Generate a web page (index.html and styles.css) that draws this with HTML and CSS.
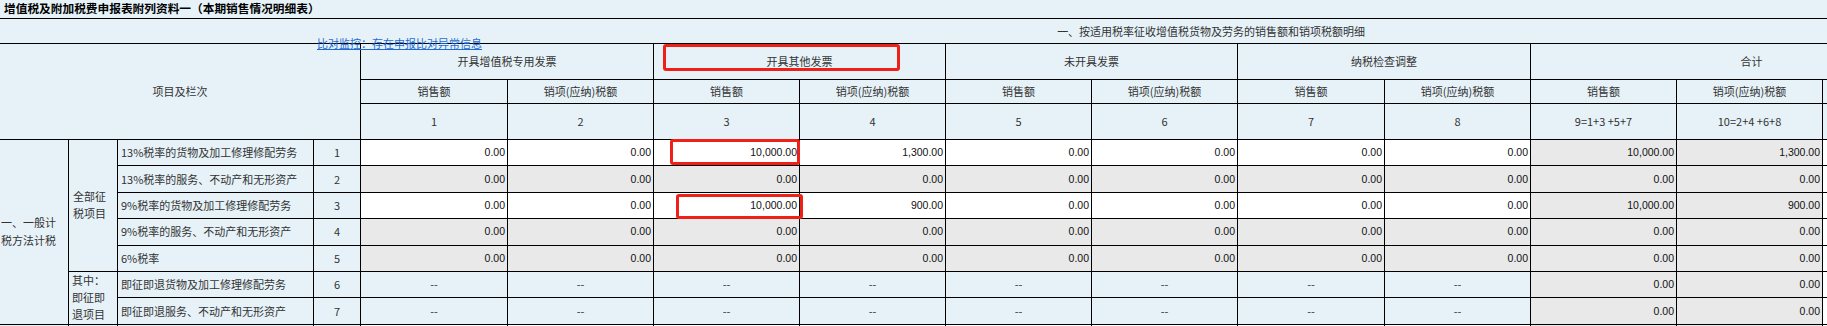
FILE: index.html
```html
<!DOCTYPE html>
<html lang="zh-CN">
<head>
<meta charset="utf-8">
<title>增值税及附加税费申报表附列资料一</title>
<link rel="stylesheet" href="styles.css">
</head>
<body>
<div class="page">
  <div class="title">增值税及附加税费申报表附列资料一（本期销售情况明细表）</div>
  <div class="sheet">
    <table class="grid">
      <colgroup>
        <col class="c-cat"><col class="c-sub"><col class="c-name"><col class="c-no">
        <col class="c-w"><col class="c-d"><col class="c-d"><col class="c-d"><col class="c-d">
        <col class="c-d"><col class="c-w"><col class="c-d"><col class="c-d"><col class="c-d">
        <col class="c-x"><col class="c-x"><col class="c-x"><col class="c-x">
      </colgroup>
      <thead>
        <tr class="h1"><th colspan="18">一、按适用税率征收增值税货物及劳务的销售额和销项税额明细</th></tr>
        <tr class="h2">
          <th colspan="4" rowspan="3">项目及栏次</th>
          <th colspan="2">开具增值税专用发票</th>
          <th colspan="2">开具其他发票</th>
          <th colspan="2">未开具发票</th>
          <th colspan="2">纳税检查调整</th>
          <th colspan="3">合计</th>
          <th rowspan="2">服务、不动产和无形资产扣除项目本期实际扣除金额</th>
          <th colspan="2">扣除后</th>
        </tr>
        <tr class="h3">
          <th>销售额</th><th>销项(应纳)税额</th>
          <th>销售额</th><th>销项(应纳)税额</th>
          <th>销售额</th><th>销项(应纳)税额</th>
          <th>销售额</th><th>销项(应纳)税额</th>
          <th>销售额</th><th>销项(应纳)税额</th><th>价税合计</th>
          <th>含税(免税)销售额</th><th>销项(应纳)税额</th>
        </tr>
        <tr class="h4">
          <th>1</th><th>2</th><th>3</th><th>4</th><th>5</th><th>6</th><th>7</th><th>8</th>
          <th>9=1+3 +5+7</th><th>10=2+4 +6+8</th><th>11=9+10</th><th>12</th><th>13=11-12</th><th>14</th>
        </tr>
      </thead>
      <tbody>
        <tr>
          <td class="cat" rowspan="7">一、一般计<br>税方法计税</td>
          <td class="sub" rowspan="5">全部征<br>税项目</td>
          <td class="name">13%税率的货物及加工修理修配劳务</td><td class="no">1</td>
          <td class="num in">0.00</td><td class="num in">0.00</td><td class="num in">10,000.00</td><td class="num in">1,300.00</td>
          <td class="num in">0.00</td><td class="num in">0.00</td><td class="num in">0.00</td><td class="num in">0.00</td>
          <td class="num ro">10,000.00</td><td class="num ro">1,300.00</td><td class="num in"></td><td class="num in"></td><td class="num in"></td><td class="num in"></td>
        </tr>
        <tr>
          <td class="name">13%税率的服务、不动产和无形资产</td><td class="no">2</td>
          <td class="num ro">0.00</td><td class="num ro">0.00</td><td class="num ro">0.00</td><td class="num ro">0.00</td>
          <td class="num ro">0.00</td><td class="num ro">0.00</td><td class="num ro">0.00</td><td class="num ro">0.00</td>
          <td class="num ro">0.00</td><td class="num ro">0.00</td><td class="num in"></td><td class="num in"></td><td class="num in"></td><td class="num in"></td>
        </tr>
        <tr>
          <td class="name">9%税率的货物及加工修理修配劳务</td><td class="no">3</td>
          <td class="num in">0.00</td><td class="num in">0.00</td><td class="num in">10,000.00</td><td class="num in">900.00</td>
          <td class="num in">0.00</td><td class="num in">0.00</td><td class="num in">0.00</td><td class="num in">0.00</td>
          <td class="num ro">10,000.00</td><td class="num ro">900.00</td><td class="num in"></td><td class="num in"></td><td class="num in"></td><td class="num in"></td>
        </tr>
        <tr>
          <td class="name">9%税率的服务、不动产和无形资产</td><td class="no">4</td>
          <td class="num ro">0.00</td><td class="num ro">0.00</td><td class="num ro">0.00</td><td class="num ro">0.00</td>
          <td class="num ro">0.00</td><td class="num ro">0.00</td><td class="num ro">0.00</td><td class="num ro">0.00</td>
          <td class="num ro">0.00</td><td class="num ro">0.00</td><td class="num in"></td><td class="num in"></td><td class="num in"></td><td class="num in"></td>
        </tr>
        <tr>
          <td class="name">6%税率</td><td class="no">5</td>
          <td class="num ro">0.00</td><td class="num ro">0.00</td><td class="num ro">0.00</td><td class="num ro">0.00</td>
          <td class="num ro">0.00</td><td class="num ro">0.00</td><td class="num ro">0.00</td><td class="num ro">0.00</td>
          <td class="num ro">0.00</td><td class="num ro">0.00</td><td class="num in"></td><td class="num in"></td><td class="num in"></td><td class="num in"></td>
        </tr>
        <tr>
          <td class="sub sub-tight" rowspan="2">其中：<br>即征即<br>退项目</td>
          <td class="name">即征即退货物及加工修理修配劳务</td><td class="no">6</td>
          <td class="na">--</td><td class="na">--</td><td class="na">--</td><td class="na">--</td>
          <td class="na">--</td><td class="na">--</td><td class="na">--</td><td class="na">--</td>
          <td class="num ro">0.00</td><td class="num ro">0.00</td><td class="num in"></td><td class="num in"></td><td class="num in"></td><td class="num in"></td>
        </tr>
        <tr>
          <td class="name">即征即退服务、不动产和无形资产</td><td class="no">7</td>
          <td class="na">--</td><td class="na">--</td><td class="na">--</td><td class="na">--</td>
          <td class="na">--</td><td class="na">--</td><td class="na">--</td><td class="na">--</td>
          <td class="num ro">0.00</td><td class="num ro">0.00</td><td class="num in"></td><td class="num in"></td><td class="num in"></td><td class="num in"></td>
        </tr>
        <tr>
          <td class="cat">二、简易计<br>税方法计税</td>
          <td class="sub">全部征<br>税项目</td>
          <td class="name">6%征收率</td><td class="no">8</td>
          <td class="num in">0.00</td><td class="num in">0.00</td><td class="num in">0.00</td><td class="num in">0.00</td>
          <td class="num in">0.00</td><td class="num in">0.00</td><td class="num in">0.00</td><td class="num in">0.00</td>
          <td class="num ro">0.00</td><td class="num ro">0.00</td><td class="num in"></td><td class="num in"></td><td class="num in"></td><td class="num in"></td>
        </tr>
      </tbody>
    </table>
  </div>
  <a class="compare-link" href="#">比对监控：存在申报比对异常信息</a>
  <span class="mark mark-head"></span>
  <span class="mark mark-r1"></span>
  <span class="mark mark-r3"></span>
</div>
</body>
</html>
```
FILE: styles.css
```css
* { box-sizing: border-box; }

html, body {
  margin: 0;
  padding: 0;
  overflow: hidden;
  background: #e6f2f8;
}

body {
  font-family: "Noto Sans CJK SC", "Microsoft YaHei", sans-serif;
  font-size: 11px;
  color: #333;
}

.page {
  position: relative;
}

.title {
  height: 18px;
  line-height: 15px;
  padding-left: 4px;
  font-size: 11.7px;
  font-weight: bold;
  color: #000;
  white-space: nowrap;
}

.sheet {
  overflow: hidden;
}

.grid {
  border-collapse: collapse;
  table-layout: fixed;
  width: 2423px;
  margin-left: -1px;
}

.c-cat { width: 69px; }
.c-sub { width: 49px; }
.c-name { width: 196px; }
.c-no { width: 47px; }
.c-w { width: 147px; }
.c-d { width: 146px; }
.c-x { width: 150px; }

.grid th,
.grid td {
  border: 1px solid #000;
  padding: 0 2px;
  overflow: hidden;
  white-space: nowrap;
  font-weight: normal;
  line-height: 15px;
}

.grid th {
  text-align: center;
  color: #333;
}

.h1 { height: 25px; }
.h2 { height: 36px; }
.h3 { height: 24px; }
.h4 { height: 36px; }
.grid tbody tr { height: 26.4px; }

.cat {
  text-align: left;
  padding-left: 1px !important;
  line-height: 17.5px !important;
  white-space: normal !important;
}

.sub {
  text-align: left;
  padding-left: 4px !important;
  line-height: 17px !important;
  white-space: normal !important;
}

.sub-tight {
  padding-left: 3px !important;
  line-height: 17px !important;
  overflow: visible !important;
}

.name {
  text-align: left;
  padding-left: 3px !important;
}

.no {
  text-align: center;
}

.num {
  font-family: "Liberation Sans", Arial, sans-serif;
  font-size: 10.5px;
  color: #111;
  text-align: right;
  padding-right: 2px !important;
}

.in { background: #fff; }
.ro { background: #e9e9e9; }

.na {
  text-align: center;
  color: #333;
}

.compare-link {
  position: absolute;
  left: 317px;
  top: 36px;
  font-size: 11px;
  line-height: 14px;
  color: #1f6bd3;
  text-decoration: underline;
  white-space: nowrap;
}

.mark {
  position: absolute;
  border: 3px solid #ee2018;
  border-radius: 3px;
}

.mark-head { left: 663px; top: 44px; width: 237px; height: 27px; }
.mark-r1 { left: 670px; top: 139px; width: 130px; height: 26px; }
.mark-r3 { left: 676px; top: 194px; width: 127px; height: 25px; }
```
